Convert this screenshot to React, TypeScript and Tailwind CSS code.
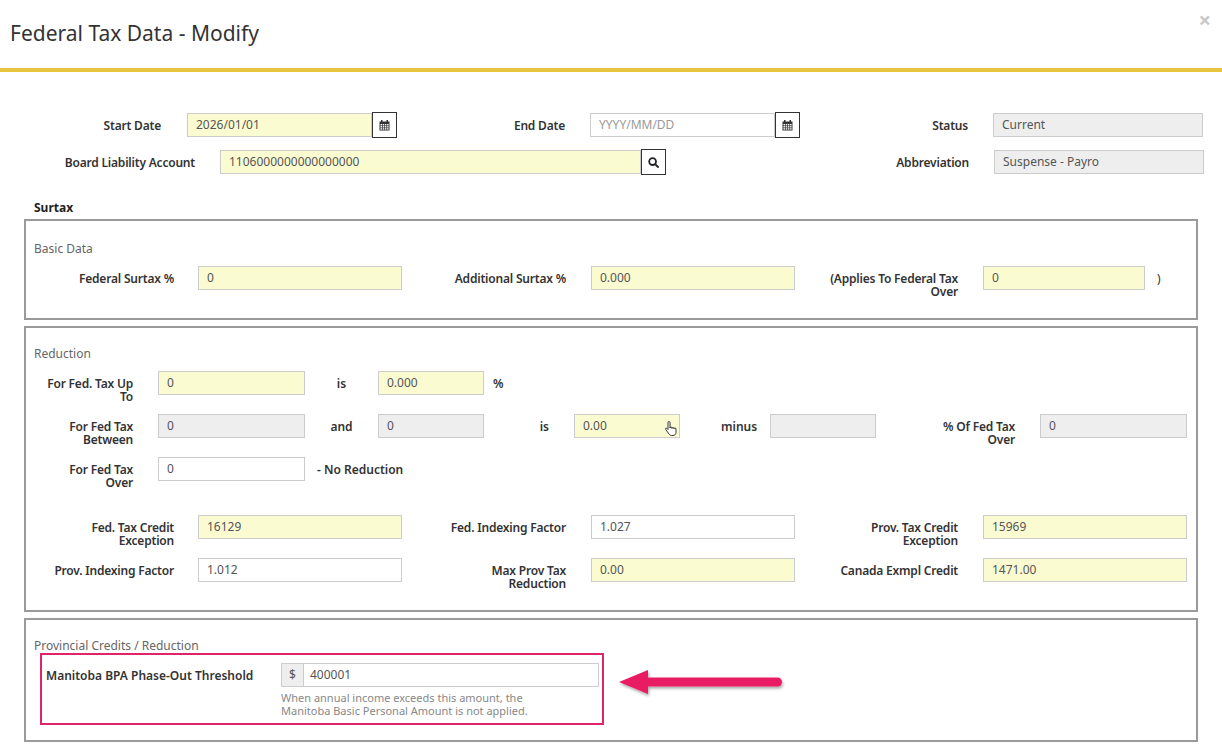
import React from 'react';

type Tone = 'yellow' | 'gray' | 'white';

const toneClass: Record<Tone, string> = {
  yellow: 'bg-[#fbfbd2]',
  gray: 'bg-[#eeeeee]',
  white: 'bg-white',
};

const Input = ({ value, tone, w, muted }: { value: string; tone: Tone; w: string; muted?: boolean }) => (
  <div
    className={`${w} ${toneClass[tone]} h-6 shrink-0 border border-[#cccccc] pl-2 flex items-center text-[12px] ${muted ? 'text-[#999]' : 'text-[#555]'}`}
  >
    {value}
  </div>
);

const Label = ({ children, w }: { children: React.ReactNode; w: string }) => (
  <div className={`${w} shrink-0 text-right text-[12px] font-semibold leading-[13px] tracking-[-0.2px] text-[#333] pt-[6px]`}>
    {children}
  </div>
);

const Row = ({ children, className }: { children: React.ReactNode; className: string }) => (
  <div className={`h-6 flex items-start ${className}`}>{children}</div>
);

const CalendarIcon = () => (
  <svg width="11" height="11" viewBox="0 0 11 11">
    <rect x="0.5" y="1.5" width="10" height="9" fill="#333" />
    <rect x="2" y="0" width="1.5" height="3" fill="#333" />
    <rect x="7.5" y="0" width="1.5" height="3" fill="#333" />
    {[0, 1, 2, 3].map((c) =>
      [0, 1, 2].map((r) => (
        <rect key={`${c}-${r}`} x={1.5 + c * 2.2} y={4 + r * 2.1} width="1.5" height="1.4" fill="#fff" />
      )),
    )}
  </svg>
);

const SearchIcon = () => (
  <svg width="11" height="11" viewBox="0 0 11 11" fill="none" stroke="#222" strokeWidth="1.8">
    <circle cx="4.6" cy="4.6" r="3.4" />
    <path d="M7.2 7.2 L10 10" strokeLinecap="round" />
  </svg>
);

const AddonButton = ({ children }: { children: React.ReactNode }) => (
  <div className="w-[25px] h-[26px] -mt-px shrink-0 border border-[#333] bg-white flex items-center justify-center">
    {children}
  </div>
);

const Box = ({ title, children, className }: { title: string; children: React.ReactNode; className: string }) => (
  <div className={`ml-6 w-[1174px] border-2 border-[#9a9a9a] ${className}`}>
    <div className="pl-2 text-[12px] text-[#666]">{title}</div>
    {children}
  </div>
);

export default function App() {
  return (
    <div className="w-[1222px] h-[746px] bg-white font-['Open_Sans',sans-serif] overflow-hidden">
      <div className="relative h-[72px] flex items-center pl-[10px] border-b-4 border-[#e8c53f]">
        <h1 className="text-[21px] text-[#333]">Federal Tax Data - Modify</h1>
        <span className="absolute right-[11px] top-[3px] text-[22px] font-bold text-[#c8c8c8]">×</span>
      </div>

      <Row className="mt-[41px]">
        <Label w="w-[161px]">Start Date</Label>
        <div className="ml-[26px] flex">
          <Input value="2026/01/01" tone="yellow" w="w-[185px]" />
          <AddonButton><CalendarIcon /></AddonButton>
        </div>
        <Label w="w-[168px]">End Date</Label>
        <div className="ml-[25px] flex">
          <Input value="YYYY/MM/DD" tone="white" w="w-[185px]" muted />
          <AddonButton><CalendarIcon /></AddonButton>
        </div>
        <Label w="w-[168px]">Status</Label>
        <div className="ml-[25px]"><Input value="Current" tone="gray" w="w-[210px]" /></div>
      </Row>

      <Row className="mt-[13px]">
        <Label w="w-[195px]">Board Liability Account</Label>
        <div className="ml-[25px] flex">
          <Input value="1106000000000000000" tone="yellow" w="w-[421px]" />
          <AddonButton><SearchIcon /></AddonButton>
        </div>
        <Label w="w-[303px]">Abbreviation</Label>
        <div className="ml-[25px]"><Input value="Suspense - Payro" tone="gray" w="w-[210px]" /></div>
      </Row>

      <div className="mt-[25px] ml-[34px] text-[12px] font-bold text-[#222]">Surtax</div>

      <Box title="Basic Data" className="mt-[2px] h-[101px] pt-[19px]">
        <Row className="mt-[8px]">
          <Label w="w-[148px]">Federal Surtax %</Label>
          <div className="ml-6"><Input value="0" tone="yellow" w="w-[204px]" /></div>
          <Label w="w-[164px]">Additional Surtax %</Label>
          <div className="ml-[25px]"><Input value="0.000" tone="yellow" w="w-[204px]" /></div>
          <Label w="w-[163px]">(Applies To Federal Tax<br />Over</Label>
          <div className="ml-[25px]"><Input value="0" tone="yellow" w="w-[162px]" /></div>
          <span className="ml-[12px] pt-[4px] text-[12px] text-[#333]">)</span>
        </Row>
      </Box>

      <Box title="Reduction" className="mt-[6px] h-[286px] pt-[17px]">
        <Row className="mt-[8px]">
          <Label w="w-[107px]">For Fed. Tax Up<br />To</Label>
          <div className="ml-[25px]"><Input value="0" tone="yellow" w="w-[147px]" /></div>
          <div className="w-[73px] text-center pt-[4px] text-[12px] font-semibold text-[#333]">is</div>
          <Input value="0.000" tone="yellow" w="w-[106px]" />
          <span className="ml-[9px] pt-[4px] text-[12px] font-semibold text-[#333]">%</span>
        </Row>
        <Row className="mt-[19px]">
          <Label w="w-[107px]">For Fed Tax<br />Between</Label>
          <div className="ml-[25px]"><Input value="0" tone="gray" w="w-[147px]" /></div>
          <div className="w-[73px] text-center pt-[4px] text-[12px] font-semibold text-[#333]">and</div>
          <Input value="0" tone="gray" w="w-[106px]" />
          <div className="w-[90px] text-right pr-[25px] pt-[4px] text-[12px] font-semibold text-[#333]">is</div>
          <div className="relative">
            <Input value="0.00" tone="yellow" w="w-[106px]" />
            <svg className="absolute left-[91px] top-[7px]" width="12" height="16" viewBox="0 0 12 16">
              <path d="M3 1.5 v7 l-1.2-1.2 c-.8-.6-1.8.3-1.1 1.1 L4 13 c.6.9 1.4 1.5 2.6 1.5 H8 c1.7 0 3-1.3 3-3 V8 c0-.7-.5-1.1-1-1.1 s-1 .4-1 1 V7.5 c0-.6-.5-1-1-1 s-1 .4-1 1 V7 c0-.6-.5-1-1-1 s-1 .4-1 1 V1.5 c0-.6-.5-1-1-1 s-1 .4-1 1z" fill="#fff" stroke="#222" strokeWidth="0.9" />
            </svg>
          </div>
          <div className="w-[90px] pl-[41px] pt-[4px] text-[12px] font-semibold text-[#333]">minus</div>
          <Input value="" tone="gray" w="w-[106px]" />
          <Label w="w-[139px]">% Of Fed Tax<br />Over</Label>
          <div className="ml-[25px]"><Input value="0" tone="gray" w="w-[147px]" /></div>
        </Row>
        <Row className="mt-[19px]">
          <Label w="w-[107px]">For Fed Tax<br />Over</Label>
          <div className="ml-[25px]"><Input value="0" tone="white" w="w-[147px]" /></div>
          <span className="ml-[12px] pt-[4px] text-[12px] font-semibold text-[#333]">- No Reduction</span>
        </Row>
        <Row className="mt-[34px]">
          <Label w="w-[148px]">Fed. Tax Credit<br />Exception</Label>
          <div className="ml-6"><Input value="16129" tone="yellow" w="w-[204px]" /></div>
          <Label w="w-[164px]">Fed. Indexing Factor</Label>
          <div className="ml-[25px]"><Input value="1.027" tone="white" w="w-[204px]" /></div>
          <Label w="w-[163px]">Prov. Tax Credit<br />Exception</Label>
          <div className="ml-[25px]"><Input value="15969" tone="yellow" w="w-[204px]" /></div>
        </Row>
        <Row className="mt-[19px]">
          <Label w="w-[148px]">Prov. Indexing Factor</Label>
          <div className="ml-6"><Input value="1.012" tone="white" w="w-[204px]" /></div>
          <Label w="w-[164px]">Max Prov Tax<br />Reduction</Label>
          <div className="ml-[25px]"><Input value="0.00" tone="yellow" w="w-[204px]" /></div>
          <Label w="w-[163px]">Canada Exmpl Credit</Label>
          <div className="ml-[25px]"><Input value="1471.00" tone="yellow" w="w-[204px]" /></div>
        </Row>
      </Box>

      <Box title="Provincial Credits / Reduction" className="mt-[6px] h-[124px] pt-[17px]">
        <div className="flex items-center">
          <div className="ml-[14px] w-[564px] h-[72px] -mt-[2px] border-2 border-[#e0246a] flex pl-[4px] pt-[8px]">
            <div className="w-[235px] pt-[4px] text-[12px] font-semibold text-[#333]">Manitoba BPA Phase-Out Threshold</div>
            <div>
              <div className="flex w-[318px] h-6 border border-[#cccccc]">
                <div className="w-[22px] bg-[#eeeeee] border-r border-[#cccccc] flex items-center justify-center text-[12px] text-[#555]">$</div>
                <div className="pl-[6px] flex items-center text-[12px] text-[#555]">400001</div>
              </div>
              <div className="mt-[4px] text-[11px] leading-[13px] text-[#888]">
                When annual income exceeds this amount, the<br />Manitoba Basic Personal Amount is not applied.
              </div>
            </div>
          </div>
          <svg className="ml-[14px] -mt-[10px]" width="168" height="34" viewBox="0 0 168 34">
            <defs>
              <filter id="sh" x="-10%" y="-30%" width="120%" height="180%">
                <feDropShadow dx="1" dy="2" stdDeviation="1.5" floodColor="#000" floodOpacity="0.35" />
              </filter>
            </defs>
            <g filter="url(#sh)" fill="#e91e63">
              <path d="M1 14 L30 2 L30 26 Z" />
              <rect x="26" y="9.5" width="138" height="9" rx="4.5" />
            </g>
          </svg>
        </div>
      </Box>
    </div>
  );
}
